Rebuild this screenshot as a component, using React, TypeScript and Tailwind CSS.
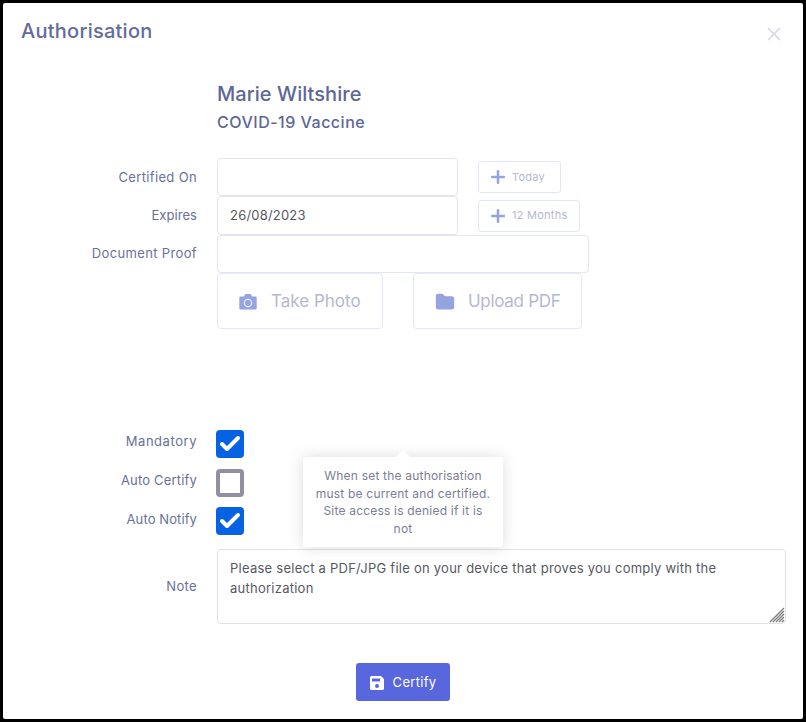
import { Folder, Plus, X, Check } from "lucide-react";
import type { ReactNode } from "react";

const font = { fontFamily: "Inter, 'Liberation Sans', sans-serif" };

function Label({ children, className = "tracking-[0.35px]" }: { children: ReactNode; className?: string }) {
  return <div className={`w-[194px] shrink-0 text-right text-[13px] text-[#6a7199] ${className}`}>{children}</div>;
}

function Row({ label, children, className = "h-[39px]", labelClass }: { label: string; children: ReactNode; className?: string; labelClass?: string }) {
  return (
    <div className={`flex items-center ${className}`}>
      <Label className={labelClass}>{label}</Label>
      <div className="ml-[20px] flex items-center">{children}</div>
    </div>
  );
}

function CheckRow({ label, checked, className, labelClass }: { label: string; checked: boolean; className: string; labelClass: string }) {
  return (
    <div className={`flex items-start ${className}`}>
      <Label className={labelClass}>{label}</Label>
      <div className="ml-[19px]">
        <Box checked={checked} />
      </div>
    </div>
  );
}

function Small({ label, className }: { label: string; className: string }) {
  return (
    <div className={`ml-[20px] flex h-[32px] items-center rounded-[3px] border border-[#e3e6f8] pl-[9px] text-[11px] tracking-[0.25px] text-[#b5b8d0] ${className}`}>
      <Plus size={20} strokeWidth={3} className="mr-[4px] text-[#95a3e0]" />
      {label}
    </div>
  );
}

function Box({ checked }: { checked: boolean }) {
  return checked ? (
    <div className="flex h-[28px] w-[28px] items-center justify-center rounded-[4px] bg-[#0563e3]">
      <Check size={24} strokeWidth={4} className="text-white" />
    </div>
  ) : (
    <div className="h-[28px] w-[28px] rounded-[4px] border-[4px] border-[#9090a0] bg-white" />
  );
}

export default function App() {
  return (
    <div style={font} className="h-[722px] w-[806px] overflow-hidden bg-black p-[3px]">
      <div className="relative h-[716px] w-[800px] rounded-[2px] bg-white">
        <div className="flex items-start justify-between pl-[18px] pr-[18px] pt-[15px]">
          <div className="text-[20px] font-medium leading-[26px] tracking-[0.25px] text-[#646c9a]">Authorisation</div>
          <X size={22} strokeWidth={1.8} className="mt-[5px] text-[#d5d7e3]" />
        </div>
        <div className="ml-[214px] mt-[35px] text-[20px] font-medium leading-[28px] tracking-[0.05px] text-[#5d6797]">Marie Wiltshire</div>
        <div className="ml-[214px] mt-[2px] text-[16px] font-medium leading-[24px] tracking-[0.5px] text-[#5d6797]">COVID-19 Vaccine</div>

        <div className="mt-[24px]">
          <Row label="Certified On" className="h-[38px]" labelClass="pt-[2px] tracking-[0.35px]">
            <div className="h-[38px] w-[241px] rounded-[4px] border border-[#e2e5ec]" />
            <Small label="Today" className="w-[83px]" />
          </Row>
          <Row label="Expires" labelClass="tracking-[0.05px]">
            <div className="flex h-[39px] w-[241px] items-center rounded-[4px] border border-[#e2e5ec] pl-[12px] text-[13px] tracking-[0.2px] text-[#575962]">26/08/2023</div>
            <Small label="12 Months" className="w-[102px]" />
          </Row>
          <Row label="Document Proof" className="h-[38px]">
            <div className="h-[38px] w-[372px] rounded-[4px] border border-[#e2e5f3]" />
          </Row>
          <div className="ml-[214px] flex">
            <div className="flex h-[56px] w-[166px] items-center rounded-[4px] border border-[#e5e8f8] pl-[21px] pt-[1px] text-[17px] text-[#b5b8d0]">
              <svg width="18" height="17" viewBox="0 0 18 17" className="mr-[14px]">
                <path d="M6 1.5 5 3.5H1.5A1.2 1.2 0 0 0 .3 4.7v10.6a1.2 1.2 0 0 0 1.2 1.2h15a1.2 1.2 0 0 0 1.2-1.2V4.7a1.2 1.2 0 0 0-1.2-1.2H13l-1-2a1 1 0 0 0-.9-.5H6.9a1 1 0 0 0-.9.5Z" fill="#95a3e0" />
                <circle cx="9" cy="10" r="3.6" fill="none" stroke="#e8ebfa" strokeWidth="1.3" />
              </svg>
              Take Photo
            </div>
            <div className="ml-[30px] flex h-[56px] w-[169px] items-center rounded-[4px] border border-[#e5e8f8] pl-[21px] pt-[1px] text-[17px] tracking-[-0.3px] text-[#b5b8d0]">
              <Folder size={20} fill="#95a3e0" stroke="#95a3e0" className="mr-[13px]" />
              Upload PDF
            </div>
          </div>
        </div>

        <div className="mt-[101px]">
          <CheckRow label="Mandatory" checked className="h-[39px]" labelClass="leading-[22px] tracking-[0.55px]" />
          <CheckRow label="Auto Certify" checked={false} className="h-[38px]" labelClass="leading-[22px] tracking-[0.18px]" />
          <CheckRow label="Auto Notify" checked className="h-[42px]" labelClass="leading-[24px] tracking-[0.1px]" />
        </div>

        <div className="flex items-center">
          <Label>Note</Label>
          <div className="relative ml-[20px] h-[75px] w-[569px] rounded-[4px] border border-[#e2e2e2] px-[12px] pt-[8px] text-[13px] leading-[20px] tracking-[0.25px] text-[#575962]">
            Please select a PDF/JPG file on your device that proves you comply with the authorization
            <svg className="absolute bottom-0 right-0" width="16" height="16" viewBox="0 0 16 16">
              <path d="M15 1 1 15M15 4 4 15M15 7 7 15M15 10 10 15M15 13 13 15" stroke="#7a7a7a" strokeWidth="1.3" />
            </svg>
          </div>
        </div>

        <div className="mt-[39px] flex justify-center">
          <div className="flex h-[38px] w-[94px] items-center justify-center rounded-[3px] bg-[#5867dd] pt-[1px] text-[13px] tracking-[0.3px] text-white">
            <svg width="14" height="14" viewBox="0 0 14 14" className="mr-[9px]">
              <path fillRule="evenodd" d="M1.5 0H11l3 3v9.5a1.5 1.5 0 0 1-1.5 1.5h-11A1.5 1.5 0 0 1 0 12.5v-11A1.5 1.5 0 0 1 1.5 0ZM2 2.5v3h8v-3ZM7 8a2 2 0 1 0 0 4 2 2 0 0 0 0-4Z" fill="white" />
            </svg>
            Certify
          </div>
        </div>

        <div className="absolute left-[300px] top-[454px] w-[200px] rounded-[3px] bg-white px-[10px] py-[10px] text-center text-[12px] leading-[17.5px] tracking-[0.2px] text-[#7b7e94] shadow-[0_0_15px_rgba(80,80,100,0.2)]">
          <div className="absolute -top-[5px] left-[95px] h-[10px] w-[10px] rotate-45 bg-white" />
          When set the authorisation must be current and certified. Site access is denied if it is not
        </div>
      </div>
    </div>
  );
}
